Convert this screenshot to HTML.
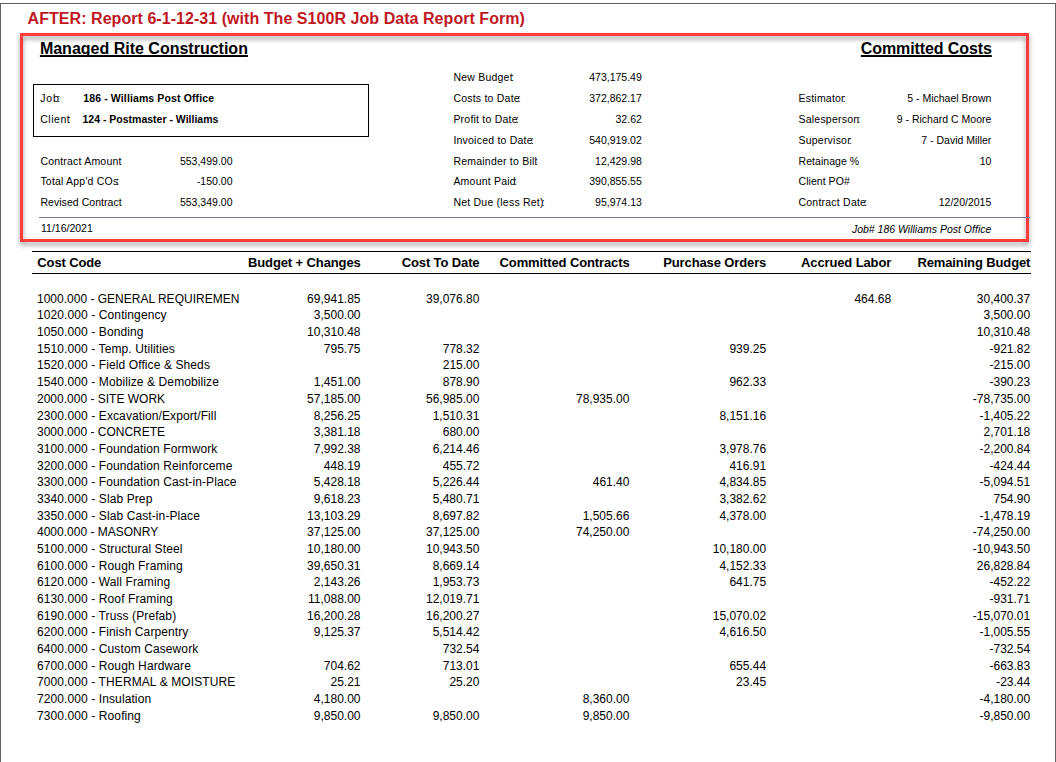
<!DOCTYPE html>
<html><head><meta charset="utf-8"><style>
html,body{margin:0;padding:0;background:#fff;}
body{width:1056px;height:762px;position:relative;overflow:hidden;font-family:"Liberation Sans",sans-serif;color:#000;}
.t{position:absolute;white-space:pre;}
.ln{position:absolute;}
</style></head><body>
<div class="ln" style="left:0;top:3px;width:1056px;height:1px;background:#606060"></div>
<div class="ln" style="left:0;top:3px;width:1px;height:759px;background:#606060"></div>
<div class="ln" style="left:1055px;top:3px;width:1px;height:759px;background:#606060"></div>
<div class="ln" style="left:20px;top:33px;width:1003px;height:203px;border:3px solid #fc3c3c;filter:drop-shadow(0.4px 3.5px 2.4px rgba(0,0,0,0.42));"></div>
<div class="ln" style="left:33px;top:84px;width:334px;height:51px;border:1px solid #000"></div>
<div class="ln" style="left:39px;top:217px;width:991px;height:1px;background:#6f7e92"></div>
<div class="ln" style="left:32px;top:251px;width:999px;height:1px;background:#000"></div>
<div class="ln" style="left:32px;top:273px;width:999px;height:1px;background:#000"></div>
<div class="t" style="top:8.66px;left:27.60px;font-size:16px;line-height:19.2px;font-weight:700;letter-spacing:0.05px;color:#c0171f;">AFTER: Report 6-1-12-31 (with The S100R Job Data Report Form)</div>
<div class="t" style="top:38.66px;left:39.90px;font-size:16px;line-height:19.2px;font-weight:700;text-decoration:underline;text-decoration-thickness:1.5px;text-decoration-skip-ink:none;">Managed Rite Construction</div>
<div class="t" style="top:38.66px;right:64.20px;font-size:16px;line-height:19.2px;font-weight:700;text-decoration:underline;text-decoration-thickness:1.5px;text-decoration-skip-ink:none;letter-spacing:-0.1px;">Committed Costs</div>
<div class="t" style="top:91.96px;left:40.20px;font-size:10.5px;line-height:12.6px;letter-spacing:0.9px;">Job<span style="margin-left:-2.6px">:</span></div>
<div class="t" style="top:91.96px;left:83.30px;font-size:10.5px;line-height:12.6px;font-weight:700;letter-spacing:0.12px;">186 - Williams Post Office</div>
<div class="t" style="top:112.76px;left:40.20px;font-size:10.5px;line-height:12.6px;letter-spacing:0.55px;">Client<span style="margin-left:-2.9px">:</span></div>
<div class="t" style="top:112.76px;left:82.50px;font-size:10.5px;line-height:12.6px;font-weight:700;">124 - Postmaster - Williams</div>
<div class="t" style="top:154.66px;left:40.40px;font-size:10.5px;line-height:12.6px;letter-spacing:0.2px;">Contract Amount</div>
<div class="t" style="top:154.66px;right:823.50px;font-size:10.5px;line-height:12.6px;">553,499.00</div>
<div class="t" style="top:175.36px;left:40.40px;font-size:10.5px;line-height:12.6px;letter-spacing:0.2px;">Total App'd COs<span style="margin-left:-2.1px">:</span></div>
<div class="t" style="top:175.36px;right:823.50px;font-size:10.5px;line-height:12.6px;">-150.00</div>
<div class="t" style="top:196.06px;left:40.40px;font-size:10.5px;line-height:12.6px;letter-spacing:0.05px;">Revised Contract</div>
<div class="t" style="top:196.06px;right:823.50px;font-size:10.5px;line-height:12.6px;">553,349.00</div>
<div class="t" style="top:71.06px;left:453.40px;font-size:10.5px;line-height:12.6px;letter-spacing:0.22px;">New Budget<span style="margin-left:-2.1px">:</span></div>
<div class="t" style="top:71.06px;right:414.20px;font-size:10.5px;line-height:12.6px;">473,175.49</div>
<div class="t" style="top:91.96px;left:453.40px;font-size:10.5px;line-height:12.6px;letter-spacing:0.22px;">Costs to Date<span style="margin-left:-2.1px">:</span></div>
<div class="t" style="top:91.96px;right:414.20px;font-size:10.5px;line-height:12.6px;">372,862.17</div>
<div class="t" style="top:112.76px;left:453.40px;font-size:10.5px;line-height:12.6px;letter-spacing:0.22px;">Profit to Date<span style="margin-left:-2.1px">:</span></div>
<div class="t" style="top:112.76px;right:414.20px;font-size:10.5px;line-height:12.6px;">32.62</div>
<div class="t" style="top:133.66px;left:453.40px;font-size:10.5px;line-height:12.6px;letter-spacing:0.22px;">Invoiced to Date<span style="margin-left:-2.1px">:</span></div>
<div class="t" style="top:133.66px;right:414.20px;font-size:10.5px;line-height:12.6px;">540,919.02</div>
<div class="t" style="top:154.66px;left:453.40px;font-size:10.5px;line-height:12.6px;letter-spacing:0.22px;">Remainder to Bill<span style="margin-left:-2.1px">:</span></div>
<div class="t" style="top:154.66px;right:414.20px;font-size:10.5px;line-height:12.6px;">12,429.98</div>
<div class="t" style="top:175.36px;left:453.40px;font-size:10.5px;line-height:12.6px;letter-spacing:0.22px;">Amount Paid<span style="margin-left:-2.1px">:</span></div>
<div class="t" style="top:175.36px;right:414.20px;font-size:10.5px;line-height:12.6px;">390,855.55</div>
<div class="t" style="top:196.06px;left:453.40px;font-size:10.5px;line-height:12.6px;letter-spacing:0.22px;">Net Due (less Ret)<span style="margin-left:-2.1px">:</span></div>
<div class="t" style="top:196.06px;right:414.20px;font-size:10.5px;line-height:12.6px;">95,974.13</div>
<div class="t" style="top:91.96px;left:798.50px;font-size:10.5px;line-height:12.6px;letter-spacing:0.22px;">Estimator<span style="margin-left:-2.1px">:</span></div>
<div class="t" style="top:91.96px;right:64.70px;font-size:10.5px;line-height:12.6px;">5 - Michael Brown</div>
<div class="t" style="top:112.76px;left:798.50px;font-size:10.5px;line-height:12.6px;letter-spacing:0.22px;">Salesperson<span style="margin-left:-2.1px">:</span></div>
<div class="t" style="top:112.76px;right:64.70px;font-size:10.5px;line-height:12.6px;">9 - Richard C Moore</div>
<div class="t" style="top:133.66px;left:798.50px;font-size:10.5px;line-height:12.6px;letter-spacing:0.22px;">Supervisor<span style="margin-left:-2.1px">:</span></div>
<div class="t" style="top:133.66px;right:64.70px;font-size:10.5px;line-height:12.6px;">7 - David Miller</div>
<div class="t" style="top:154.66px;left:798.50px;font-size:10.5px;line-height:12.6px;letter-spacing:0.05px;">Retainage %</div>
<div class="t" style="top:154.66px;right:64.70px;font-size:10.5px;line-height:12.6px;">10</div>
<div class="t" style="top:175.36px;left:798.50px;font-size:10.5px;line-height:12.6px;letter-spacing:0.05px;">Client PO#</div>
<div class="t" style="top:196.06px;left:798.50px;font-size:10.5px;line-height:12.6px;letter-spacing:0.22px;">Contract Date<span style="margin-left:-2.1px">:</span></div>
<div class="t" style="top:196.06px;right:64.70px;font-size:10.5px;line-height:12.6px;">12/20/2015</div>
<div class="t" style="top:221.56px;left:41.00px;font-size:10.5px;line-height:12.6px;">11/16/2021</div>
<div class="t" style="top:222.66px;right:64.70px;font-size:10.5px;line-height:12.6px;font-style:italic;">Job# 186 Williams Post Office</div>
<div class="t" style="top:254.90px;left:37.30px;font-size:13px;line-height:15.6px;font-weight:700;letter-spacing:-0.12px;">Cost Code</div>
<div class="t" style="top:254.90px;right:695.40px;font-size:13px;line-height:15.6px;font-weight:700;letter-spacing:-0.12px;">Budget + Changes</div>
<div class="t" style="top:254.90px;right:576.50px;font-size:13px;line-height:15.6px;font-weight:700;letter-spacing:-0.12px;">Cost To Date</div>
<div class="t" style="top:254.90px;right:426.50px;font-size:13px;line-height:15.6px;font-weight:700;letter-spacing:-0.12px;">Committed Contracts</div>
<div class="t" style="top:254.90px;right:289.80px;font-size:13px;line-height:15.6px;font-weight:700;letter-spacing:-0.12px;">Purchase Orders</div>
<div class="t" style="top:254.90px;right:164.80px;font-size:13px;line-height:15.6px;font-weight:700;letter-spacing:-0.12px;">Accrued Labor</div>
<div class="t" style="top:254.90px;right:25.70px;font-size:13px;line-height:15.6px;font-weight:700;letter-spacing:-0.12px;">Remaining Budget</div>
<div class="t" style="top:291.74px;left:37.00px;font-size:12px;line-height:14.4px;">1000.000 - GENERAL REQUIREMEN</div>
<div class="t" style="top:291.74px;right:695.50px;font-size:12px;line-height:14.4px;">69,941.85</div>
<div class="t" style="top:291.74px;right:576.60px;font-size:12px;line-height:14.4px;">39,076.80</div>
<div class="t" style="top:291.74px;right:164.90px;font-size:12px;line-height:14.4px;">464.68</div>
<div class="t" style="top:291.74px;right:25.80px;font-size:12px;line-height:14.4px;">30,400.37</div>
<div class="t" style="top:308.42px;left:37.00px;font-size:12px;line-height:14.4px;letter-spacing:0.1px;">1020.000 - Contingency</div>
<div class="t" style="top:308.42px;right:695.50px;font-size:12px;line-height:14.4px;">3,500.00</div>
<div class="t" style="top:308.42px;right:25.80px;font-size:12px;line-height:14.4px;">3,500.00</div>
<div class="t" style="top:325.10px;left:37.00px;font-size:12px;line-height:14.4px;letter-spacing:0.1px;">1050.000 - Bonding</div>
<div class="t" style="top:325.10px;right:695.50px;font-size:12px;line-height:14.4px;">10,310.48</div>
<div class="t" style="top:325.10px;right:25.80px;font-size:12px;line-height:14.4px;">10,310.48</div>
<div class="t" style="top:341.78px;left:37.00px;font-size:12px;line-height:14.4px;letter-spacing:0.1px;">1510.000 - Temp. Utilities</div>
<div class="t" style="top:341.78px;right:695.50px;font-size:12px;line-height:14.4px;">795.75</div>
<div class="t" style="top:341.78px;right:576.60px;font-size:12px;line-height:14.4px;">778.32</div>
<div class="t" style="top:341.78px;right:289.90px;font-size:12px;line-height:14.4px;">939.25</div>
<div class="t" style="top:341.78px;right:25.80px;font-size:12px;line-height:14.4px;">-921.82</div>
<div class="t" style="top:358.46px;left:37.00px;font-size:12px;line-height:14.4px;letter-spacing:0.1px;">1520.000 - Field Office &amp; Sheds</div>
<div class="t" style="top:358.46px;right:576.60px;font-size:12px;line-height:14.4px;">215.00</div>
<div class="t" style="top:358.46px;right:25.80px;font-size:12px;line-height:14.4px;">-215.00</div>
<div class="t" style="top:375.14px;left:37.00px;font-size:12px;line-height:14.4px;letter-spacing:0.1px;">1540.000 - Mobilize &amp; Demobilize</div>
<div class="t" style="top:375.14px;right:695.50px;font-size:12px;line-height:14.4px;">1,451.00</div>
<div class="t" style="top:375.14px;right:576.60px;font-size:12px;line-height:14.4px;">878.90</div>
<div class="t" style="top:375.14px;right:289.90px;font-size:12px;line-height:14.4px;">962.33</div>
<div class="t" style="top:375.14px;right:25.80px;font-size:12px;line-height:14.4px;">-390.23</div>
<div class="t" style="top:391.82px;left:37.00px;font-size:12px;line-height:14.4px;">2000.000 - SITE WORK</div>
<div class="t" style="top:391.82px;right:695.50px;font-size:12px;line-height:14.4px;">57,185.00</div>
<div class="t" style="top:391.82px;right:576.60px;font-size:12px;line-height:14.4px;">56,985.00</div>
<div class="t" style="top:391.82px;right:426.60px;font-size:12px;line-height:14.4px;">78,935.00</div>
<div class="t" style="top:391.82px;right:25.80px;font-size:12px;line-height:14.4px;">-78,735.00</div>
<div class="t" style="top:408.50px;left:37.00px;font-size:12px;line-height:14.4px;letter-spacing:0.1px;">2300.000 - Excavation/Export/Fill</div>
<div class="t" style="top:408.50px;right:695.50px;font-size:12px;line-height:14.4px;">8,256.25</div>
<div class="t" style="top:408.50px;right:576.60px;font-size:12px;line-height:14.4px;">1,510.31</div>
<div class="t" style="top:408.50px;right:289.90px;font-size:12px;line-height:14.4px;">8,151.16</div>
<div class="t" style="top:408.50px;right:25.80px;font-size:12px;line-height:14.4px;">-1,405.22</div>
<div class="t" style="top:425.18px;left:37.00px;font-size:12px;line-height:14.4px;">3000.000 - CONCRETE</div>
<div class="t" style="top:425.18px;right:695.50px;font-size:12px;line-height:14.4px;">3,381.18</div>
<div class="t" style="top:425.18px;right:576.60px;font-size:12px;line-height:14.4px;">680.00</div>
<div class="t" style="top:425.18px;right:25.80px;font-size:12px;line-height:14.4px;">2,701.18</div>
<div class="t" style="top:441.86px;left:37.00px;font-size:12px;line-height:14.4px;letter-spacing:0.1px;">3100.000 - Foundation Formwork</div>
<div class="t" style="top:441.86px;right:695.50px;font-size:12px;line-height:14.4px;">7,992.38</div>
<div class="t" style="top:441.86px;right:576.60px;font-size:12px;line-height:14.4px;">6,214.46</div>
<div class="t" style="top:441.86px;right:289.90px;font-size:12px;line-height:14.4px;">3,978.76</div>
<div class="t" style="top:441.86px;right:25.80px;font-size:12px;line-height:14.4px;">-2,200.84</div>
<div class="t" style="top:458.54px;left:37.00px;font-size:12px;line-height:14.4px;letter-spacing:0.1px;">3200.000 - Foundation Reinforceme</div>
<div class="t" style="top:458.54px;right:695.50px;font-size:12px;line-height:14.4px;">448.19</div>
<div class="t" style="top:458.54px;right:576.60px;font-size:12px;line-height:14.4px;">455.72</div>
<div class="t" style="top:458.54px;right:289.90px;font-size:12px;line-height:14.4px;">416.91</div>
<div class="t" style="top:458.54px;right:25.80px;font-size:12px;line-height:14.4px;">-424.44</div>
<div class="t" style="top:475.22px;left:37.00px;font-size:12px;line-height:14.4px;letter-spacing:0.1px;">3300.000 - Foundation Cast-in-Place</div>
<div class="t" style="top:475.22px;right:695.50px;font-size:12px;line-height:14.4px;">5,428.18</div>
<div class="t" style="top:475.22px;right:576.60px;font-size:12px;line-height:14.4px;">5,226.44</div>
<div class="t" style="top:475.22px;right:426.60px;font-size:12px;line-height:14.4px;">461.40</div>
<div class="t" style="top:475.22px;right:289.90px;font-size:12px;line-height:14.4px;">4,834.85</div>
<div class="t" style="top:475.22px;right:25.80px;font-size:12px;line-height:14.4px;">-5,094.51</div>
<div class="t" style="top:491.90px;left:37.00px;font-size:12px;line-height:14.4px;letter-spacing:0.1px;">3340.000 - Slab Prep</div>
<div class="t" style="top:491.90px;right:695.50px;font-size:12px;line-height:14.4px;">9,618.23</div>
<div class="t" style="top:491.90px;right:576.60px;font-size:12px;line-height:14.4px;">5,480.71</div>
<div class="t" style="top:491.90px;right:289.90px;font-size:12px;line-height:14.4px;">3,382.62</div>
<div class="t" style="top:491.90px;right:25.80px;font-size:12px;line-height:14.4px;">754.90</div>
<div class="t" style="top:508.58px;left:37.00px;font-size:12px;line-height:14.4px;letter-spacing:0.1px;">3350.000 - Slab Cast-in-Place</div>
<div class="t" style="top:508.58px;right:695.50px;font-size:12px;line-height:14.4px;">13,103.29</div>
<div class="t" style="top:508.58px;right:576.60px;font-size:12px;line-height:14.4px;">8,697.82</div>
<div class="t" style="top:508.58px;right:426.60px;font-size:12px;line-height:14.4px;">1,505.66</div>
<div class="t" style="top:508.58px;right:289.90px;font-size:12px;line-height:14.4px;">4,378.00</div>
<div class="t" style="top:508.58px;right:25.80px;font-size:12px;line-height:14.4px;">-1,478.19</div>
<div class="t" style="top:525.26px;left:37.00px;font-size:12px;line-height:14.4px;">4000.000 - MASONRY</div>
<div class="t" style="top:525.26px;right:695.50px;font-size:12px;line-height:14.4px;">37,125.00</div>
<div class="t" style="top:525.26px;right:576.60px;font-size:12px;line-height:14.4px;">37,125.00</div>
<div class="t" style="top:525.26px;right:426.60px;font-size:12px;line-height:14.4px;">74,250.00</div>
<div class="t" style="top:525.26px;right:25.80px;font-size:12px;line-height:14.4px;">-74,250.00</div>
<div class="t" style="top:541.94px;left:37.00px;font-size:12px;line-height:14.4px;letter-spacing:0.1px;">5100.000 - Structural Steel</div>
<div class="t" style="top:541.94px;right:695.50px;font-size:12px;line-height:14.4px;">10,180.00</div>
<div class="t" style="top:541.94px;right:576.60px;font-size:12px;line-height:14.4px;">10,943.50</div>
<div class="t" style="top:541.94px;right:289.90px;font-size:12px;line-height:14.4px;">10,180.00</div>
<div class="t" style="top:541.94px;right:25.80px;font-size:12px;line-height:14.4px;">-10,943.50</div>
<div class="t" style="top:558.62px;left:37.00px;font-size:12px;line-height:14.4px;letter-spacing:0.1px;">6100.000 - Rough Framing</div>
<div class="t" style="top:558.62px;right:695.50px;font-size:12px;line-height:14.4px;">39,650.31</div>
<div class="t" style="top:558.62px;right:576.60px;font-size:12px;line-height:14.4px;">8,669.14</div>
<div class="t" style="top:558.62px;right:289.90px;font-size:12px;line-height:14.4px;">4,152.33</div>
<div class="t" style="top:558.62px;right:25.80px;font-size:12px;line-height:14.4px;">26,828.84</div>
<div class="t" style="top:575.30px;left:37.00px;font-size:12px;line-height:14.4px;letter-spacing:0.1px;">6120.000 - Wall Framing</div>
<div class="t" style="top:575.30px;right:695.50px;font-size:12px;line-height:14.4px;">2,143.26</div>
<div class="t" style="top:575.30px;right:576.60px;font-size:12px;line-height:14.4px;">1,953.73</div>
<div class="t" style="top:575.30px;right:289.90px;font-size:12px;line-height:14.4px;">641.75</div>
<div class="t" style="top:575.30px;right:25.80px;font-size:12px;line-height:14.4px;">-452.22</div>
<div class="t" style="top:591.98px;left:37.00px;font-size:12px;line-height:14.4px;letter-spacing:0.1px;">6130.000 - Roof Framing</div>
<div class="t" style="top:591.98px;right:695.50px;font-size:12px;line-height:14.4px;">11,088.00</div>
<div class="t" style="top:591.98px;right:576.60px;font-size:12px;line-height:14.4px;">12,019.71</div>
<div class="t" style="top:591.98px;right:25.80px;font-size:12px;line-height:14.4px;">-931.71</div>
<div class="t" style="top:608.66px;left:37.00px;font-size:12px;line-height:14.4px;letter-spacing:0.1px;">6190.000 - Truss (Prefab)</div>
<div class="t" style="top:608.66px;right:695.50px;font-size:12px;line-height:14.4px;">16,200.28</div>
<div class="t" style="top:608.66px;right:576.60px;font-size:12px;line-height:14.4px;">16,200.27</div>
<div class="t" style="top:608.66px;right:289.90px;font-size:12px;line-height:14.4px;">15,070.02</div>
<div class="t" style="top:608.66px;right:25.80px;font-size:12px;line-height:14.4px;">-15,070.01</div>
<div class="t" style="top:625.34px;left:37.00px;font-size:12px;line-height:14.4px;letter-spacing:0.1px;">6200.000 - Finish Carpentry</div>
<div class="t" style="top:625.34px;right:695.50px;font-size:12px;line-height:14.4px;">9,125.37</div>
<div class="t" style="top:625.34px;right:576.60px;font-size:12px;line-height:14.4px;">5,514.42</div>
<div class="t" style="top:625.34px;right:289.90px;font-size:12px;line-height:14.4px;">4,616.50</div>
<div class="t" style="top:625.34px;right:25.80px;font-size:12px;line-height:14.4px;">-1,005.55</div>
<div class="t" style="top:642.02px;left:37.00px;font-size:12px;line-height:14.4px;letter-spacing:0.1px;">6400.000 - Custom Casework</div>
<div class="t" style="top:642.02px;right:576.60px;font-size:12px;line-height:14.4px;">732.54</div>
<div class="t" style="top:642.02px;right:25.80px;font-size:12px;line-height:14.4px;">-732.54</div>
<div class="t" style="top:658.70px;left:37.00px;font-size:12px;line-height:14.4px;letter-spacing:0.1px;">6700.000 - Rough Hardware</div>
<div class="t" style="top:658.70px;right:695.50px;font-size:12px;line-height:14.4px;">704.62</div>
<div class="t" style="top:658.70px;right:576.60px;font-size:12px;line-height:14.4px;">713.01</div>
<div class="t" style="top:658.70px;right:289.90px;font-size:12px;line-height:14.4px;">655.44</div>
<div class="t" style="top:658.70px;right:25.80px;font-size:12px;line-height:14.4px;">-663.83</div>
<div class="t" style="top:675.38px;left:37.00px;font-size:12px;line-height:14.4px;letter-spacing:0.1px;">7000.000 - THERMAL &amp; MOISTURE</div>
<div class="t" style="top:675.38px;right:695.50px;font-size:12px;line-height:14.4px;">25.21</div>
<div class="t" style="top:675.38px;right:576.60px;font-size:12px;line-height:14.4px;">25.20</div>
<div class="t" style="top:675.38px;right:289.90px;font-size:12px;line-height:14.4px;">23.45</div>
<div class="t" style="top:675.38px;right:25.80px;font-size:12px;line-height:14.4px;">-23.44</div>
<div class="t" style="top:692.06px;left:37.00px;font-size:12px;line-height:14.4px;letter-spacing:0.1px;">7200.000 - Insulation</div>
<div class="t" style="top:692.06px;right:695.50px;font-size:12px;line-height:14.4px;">4,180.00</div>
<div class="t" style="top:692.06px;right:426.60px;font-size:12px;line-height:14.4px;">8,360.00</div>
<div class="t" style="top:692.06px;right:25.80px;font-size:12px;line-height:14.4px;">-4,180.00</div>
<div class="t" style="top:708.74px;left:37.00px;font-size:12px;line-height:14.4px;letter-spacing:0.1px;">7300.000 - Roofing</div>
<div class="t" style="top:708.74px;right:695.50px;font-size:12px;line-height:14.4px;">9,850.00</div>
<div class="t" style="top:708.74px;right:576.60px;font-size:12px;line-height:14.4px;">9,850.00</div>
<div class="t" style="top:708.74px;right:426.60px;font-size:12px;line-height:14.4px;">9,850.00</div>
<div class="t" style="top:708.74px;right:25.80px;font-size:12px;line-height:14.4px;">-9,850.00</div>

</body></html>
